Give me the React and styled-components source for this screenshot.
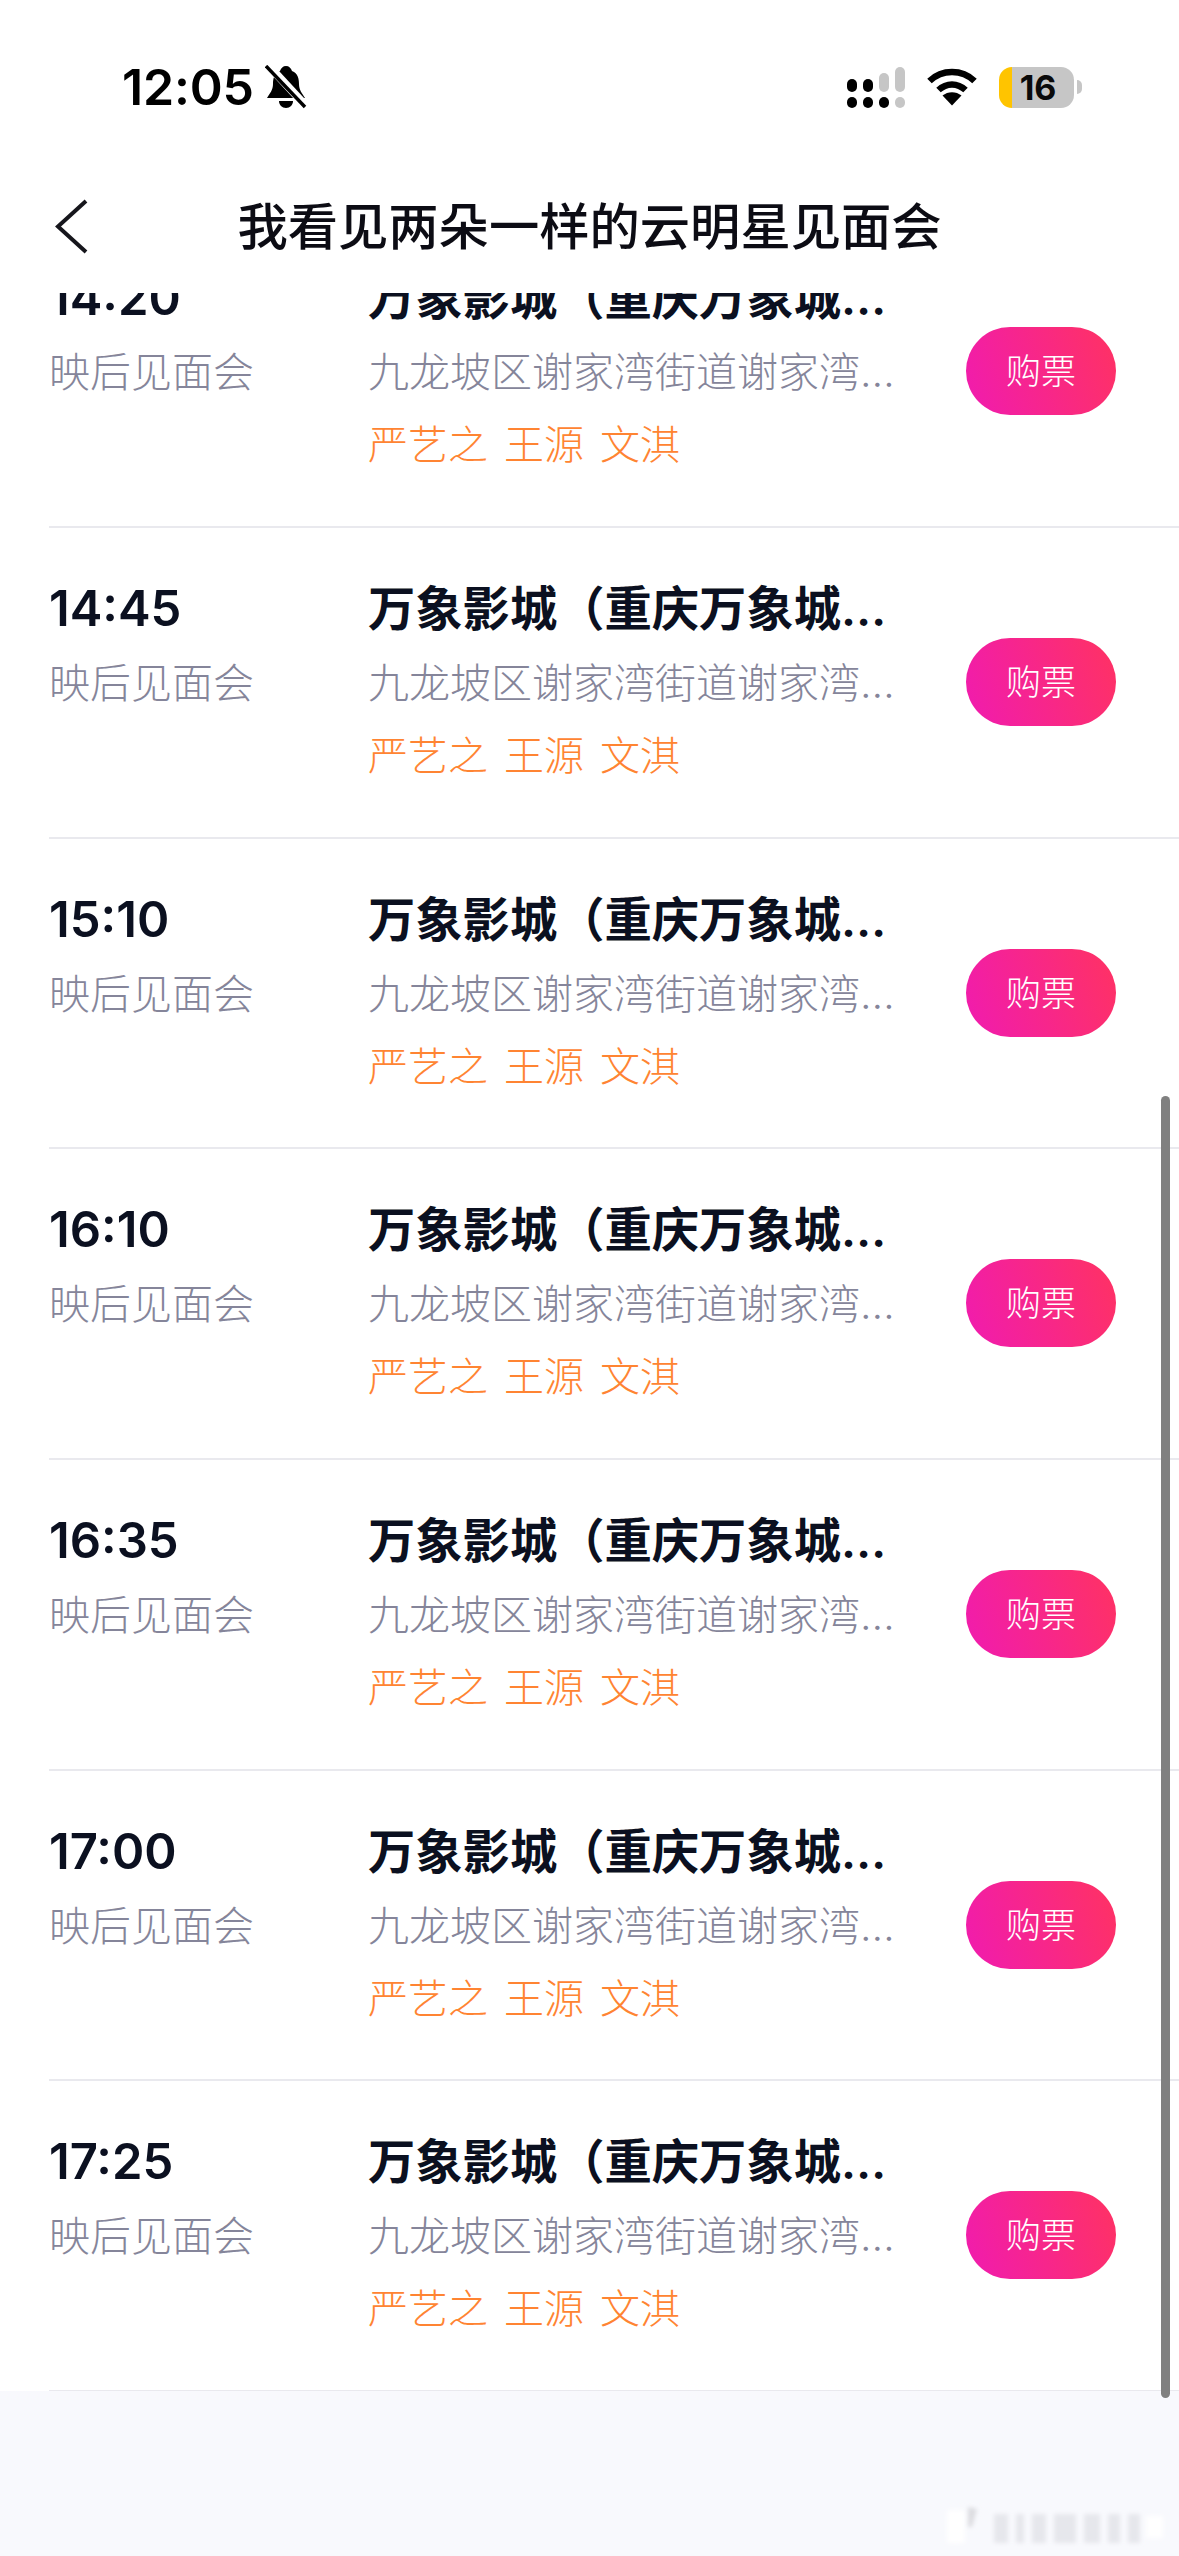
import React from "react";
import styled, { createGlobalStyle } from "styled-components";

const Global = createGlobalStyle`
  html, body { margin: 0; padding: 0; background: #f8f9fd; }
  * { box-sizing: border-box; }
`;

const FONT = `Inter, "Noto Sans CJK SC", sans-serif`;

const Page = styled.div`
  position: relative;
  width: 1179px;
  height: 2556px;
  overflow: hidden;
  background: #f8f9fd;
  font-family: ${FONT};
`;

const Header = styled.header`
  background: #fff;
  height: 293px;
  display: flex;
  flex-direction: column;
`;

const StatusBar = styled.div`
  height: 174px;
  padding: 61px 97px 0 122px;
  display: flex;
  justify-content: space-between;
  align-items: flex-start;
`;

const StatusLeft = styled.div`
  display: flex;
  align-items: center;
  gap: 11px;
`;

const Clock = styled.span`
  font-size: 50px;
  line-height: 52px;
  font-weight: 600;
  color: #000;
  letter-spacing: -0.2px;
`;

const StatusRight = styled.div`
  display: flex;
  align-items: center;
  height: 52px;
  gap: 22px;
`;

const Battery = styled.div`
  width: 75px;
  height: 41px;
  border-radius: 13px;
  overflow: hidden;
  background: linear-gradient(90deg, #ffc400 0 13px, #c6c6c6 13px);
  display: flex;
  align-items: center;
  justify-content: center;
  padding-left: 3px;
  font-size: 34px;
  font-weight: 700;
  color: #0a0a0a;
`;

const BatteryTip = styled.span`
  width: 5px;
  height: 14px;
  margin-left: -19px;
  background: #c6c6c6;
  border-radius: 0 6px 6px 0;
`;

const NavBar = styled.nav`
  height: 114px;
  position: relative;
  display: flex;
  align-items: center;
  justify-content: center;
  margin-top: -4px;
`;

const BackIcon = styled.svg`
  position: absolute;
  left: 50px;
  top: 29px;
`;

const Title = styled.h1`
  margin: 0;
  font-size: 50.3px;
  line-height: 64px;
  font-weight: 500;
  color: #0c0c14;
`;

const List = styled.section`
  height: 2098px;
  overflow: hidden;
  background: #fff;
`;

const Rows = styled.div`
  margin-top: -75.7px;
`;

const Row = styled.article`
  height: 310.67px;
  margin-left: 49px;
  padding: 0 63px 0 0;
  border-bottom: 2px solid #e9e9ee;
  display: grid;
  grid-template-columns: 319px 536px 1fr;
  align-items: start;
`;

const Cell = styled.div`
  padding-top: 46px;
  min-width: 0;
`;

const Time = styled.div`
  font-size: 49px;
  line-height: 70px;
  font-weight: 600;
  color: #0b1020;
`;

const Sub = styled.div`
  margin-top: 6px;
  font-size: 41px;
  line-height: 66px;
  font-weight: 300;
  color: #85859a;
  white-space: nowrap;
  overflow: hidden;
  text-overflow: ellipsis;
`;

const Cinema = styled(Time)`
  width: 529px;
  font-size: 47.3px;
  white-space: nowrap;
  overflow: hidden;
  text-overflow: ellipsis;
`;

const Stars = styled.div`
  display: flex;
  gap: 16px;
  margin-top: 9px;
  font-size: 40px;
  line-height: 62px;
  font-weight: 300;
  color: #ff8432;
`;

const BuyCell = styled.div`
  padding-top: 110px;
  display: flex;
  justify-content: flex-end;
`;

const Buy = styled.button`
  width: 150px;
  height: 88px;
  border: 0;
  padding: 0 0 5px;
  border-radius: 44px;
  background: linear-gradient(70deg, #f01bb0 0%, #ff3262 100%);
  color: #fff;
  font-family: ${FONT};
  font-size: 35px;
  font-weight: 300;
`;

const Scrollbar = styled.div`
  position: absolute;
  left: 1161px;
  top: 1096px;
  width: 9px;
  height: 1302px;
  border-radius: 5px;
  background: #808080;
`;

const Watermark = styled.svg`
  position: absolute;
  left: 930px;
  top: 2490px;
`;

const times = ["14:20", "14:45", "15:10", "16:10", "16:35", "17:00", "17:25"];

const Bell = () => (
  <svg width="42" height="44" viewBox="0 0 42 44">
    <path d="M21 1c3 0 5 2 6 5 6 2 7 8 7 13 0 6 3 9 6 14H2c3-5 6-8 6-14 0-5 1-11 7-13 1-3 3-5 6-5z" fill="#000" />
    <path d="M14 36h14c0 4-3 7-7 7s-7-3-7-7z" fill="#000" />
    <path d="M3 0l38 41" stroke="#fff" strokeWidth="8" />
    <path d="M1 1l39 41" stroke="#000" strokeWidth="3.4" />
  </svg>
);

const Signal = () => (
  <svg width="58" height="41" viewBox="0 0 58 41" fill="#000">
    <rect x="0" y="12" width="10" height="13" rx="5" />
    <rect x="16" y="12" width="10" height="13" rx="5" />
    <rect x="32" y="6" width="10" height="19" rx="5" fill="#c6c6c6" />
    <rect x="48" y="0" width="10" height="25" rx="5" fill="#c6c6c6" />
    <rect x="0" y="30" width="10" height="11" rx="5" />
    <rect x="16" y="30" width="10" height="11" rx="5" />
    <rect x="32" y="30" width="10" height="11" rx="5" />
    <rect x="48" y="30" width="10" height="11" rx="5" fill="#c6c6c6" />
  </svg>
);

const Wifi = () => (
  <svg width="50" height="38" viewBox="0 0 50 38" fill="none" stroke="#000">
    <path d="M2.5 13C15 1 35 1 47.5 13" strokeWidth="6.5" />
    <path d="M11.5 22c8-7.5 19-7.5 27 0" strokeWidth="6.5" />
    <path d="M15.5 27.5c5.5-4.5 13.5-4.5 19 0l-9.500 10z" fill="#000" stroke="none" />
  </svg>
);

export default function App() {
  return (
    <Page>
      <Global />
      <Header>
        <StatusBar>
          <StatusLeft>
            <Clock>12:05</Clock>
            <Bell />
          </StatusLeft>
          <StatusRight>
            <Signal />
            <Wifi />
            <Battery>16</Battery>
            <BatteryTip />
          </StatusRight>
        </StatusBar>
        <NavBar>
          <BackIcon width="40" height="56" viewBox="0 0 40 56" fill="none">
            <path d="M36 2L8 27.500l28 25.500" stroke="#16161c" strokeWidth="4" />
          </BackIcon>
          <Title>我看见两朵一样的云明星见面会</Title>
        </NavBar>
      </Header>
      <List>
        <Rows>
          {times.map((t) => (
            <Row key={t}>
              <Cell>
                <Time>{t}</Time>
                <Sub>映后见面会</Sub>
              </Cell>
              <Cell>
                <Cinema>万象影城（重庆万象城店）</Cinema>
                <Sub>九龙坡区谢家湾街道谢家湾华润二十四城</Sub>
                <Stars>
                  <span>严艺之</span>
                  <span>王源</span>
                  <span>文淇</span>
                </Stars>
              </Cell>
              <BuyCell>
                <Buy>购票</Buy>
              </BuyCell>
            </Row>
          ))}
        </Rows>
      </List>
      <Scrollbar />
      <Watermark width="240" height="60" viewBox="0 0 240 60">
        <defs>
          <filter id="wmBlur"><feGaussianBlur stdDeviation="2" /></filter>
        </defs>
        <g filter="url(#wmBlur)">
          <rect x="17" y="20" width="18" height="33" rx="3" fill="#ffffff" />
          <path d="M38 17l9 2-5 18-4 0z" fill="#dcdce0" />
          <g fill="#e6e7ec">
            <rect x="64" y="24" width="14" height="29" />
            <rect x="86" y="24" width="8" height="29" />
            <rect x="102" y="24" width="14" height="29" />
            <rect x="124" y="24" width="22" height="29" />
            <rect x="154" y="24" width="16" height="29" />
            <rect x="178" y="24" width="12" height="29" />
            <rect x="198" y="24" width="12" height="29" />
          </g>
          <rect x="216" y="26" width="17" height="22" fill="#ffffff" />
        </g>
      </Watermark>
    </Page>
  );
}
